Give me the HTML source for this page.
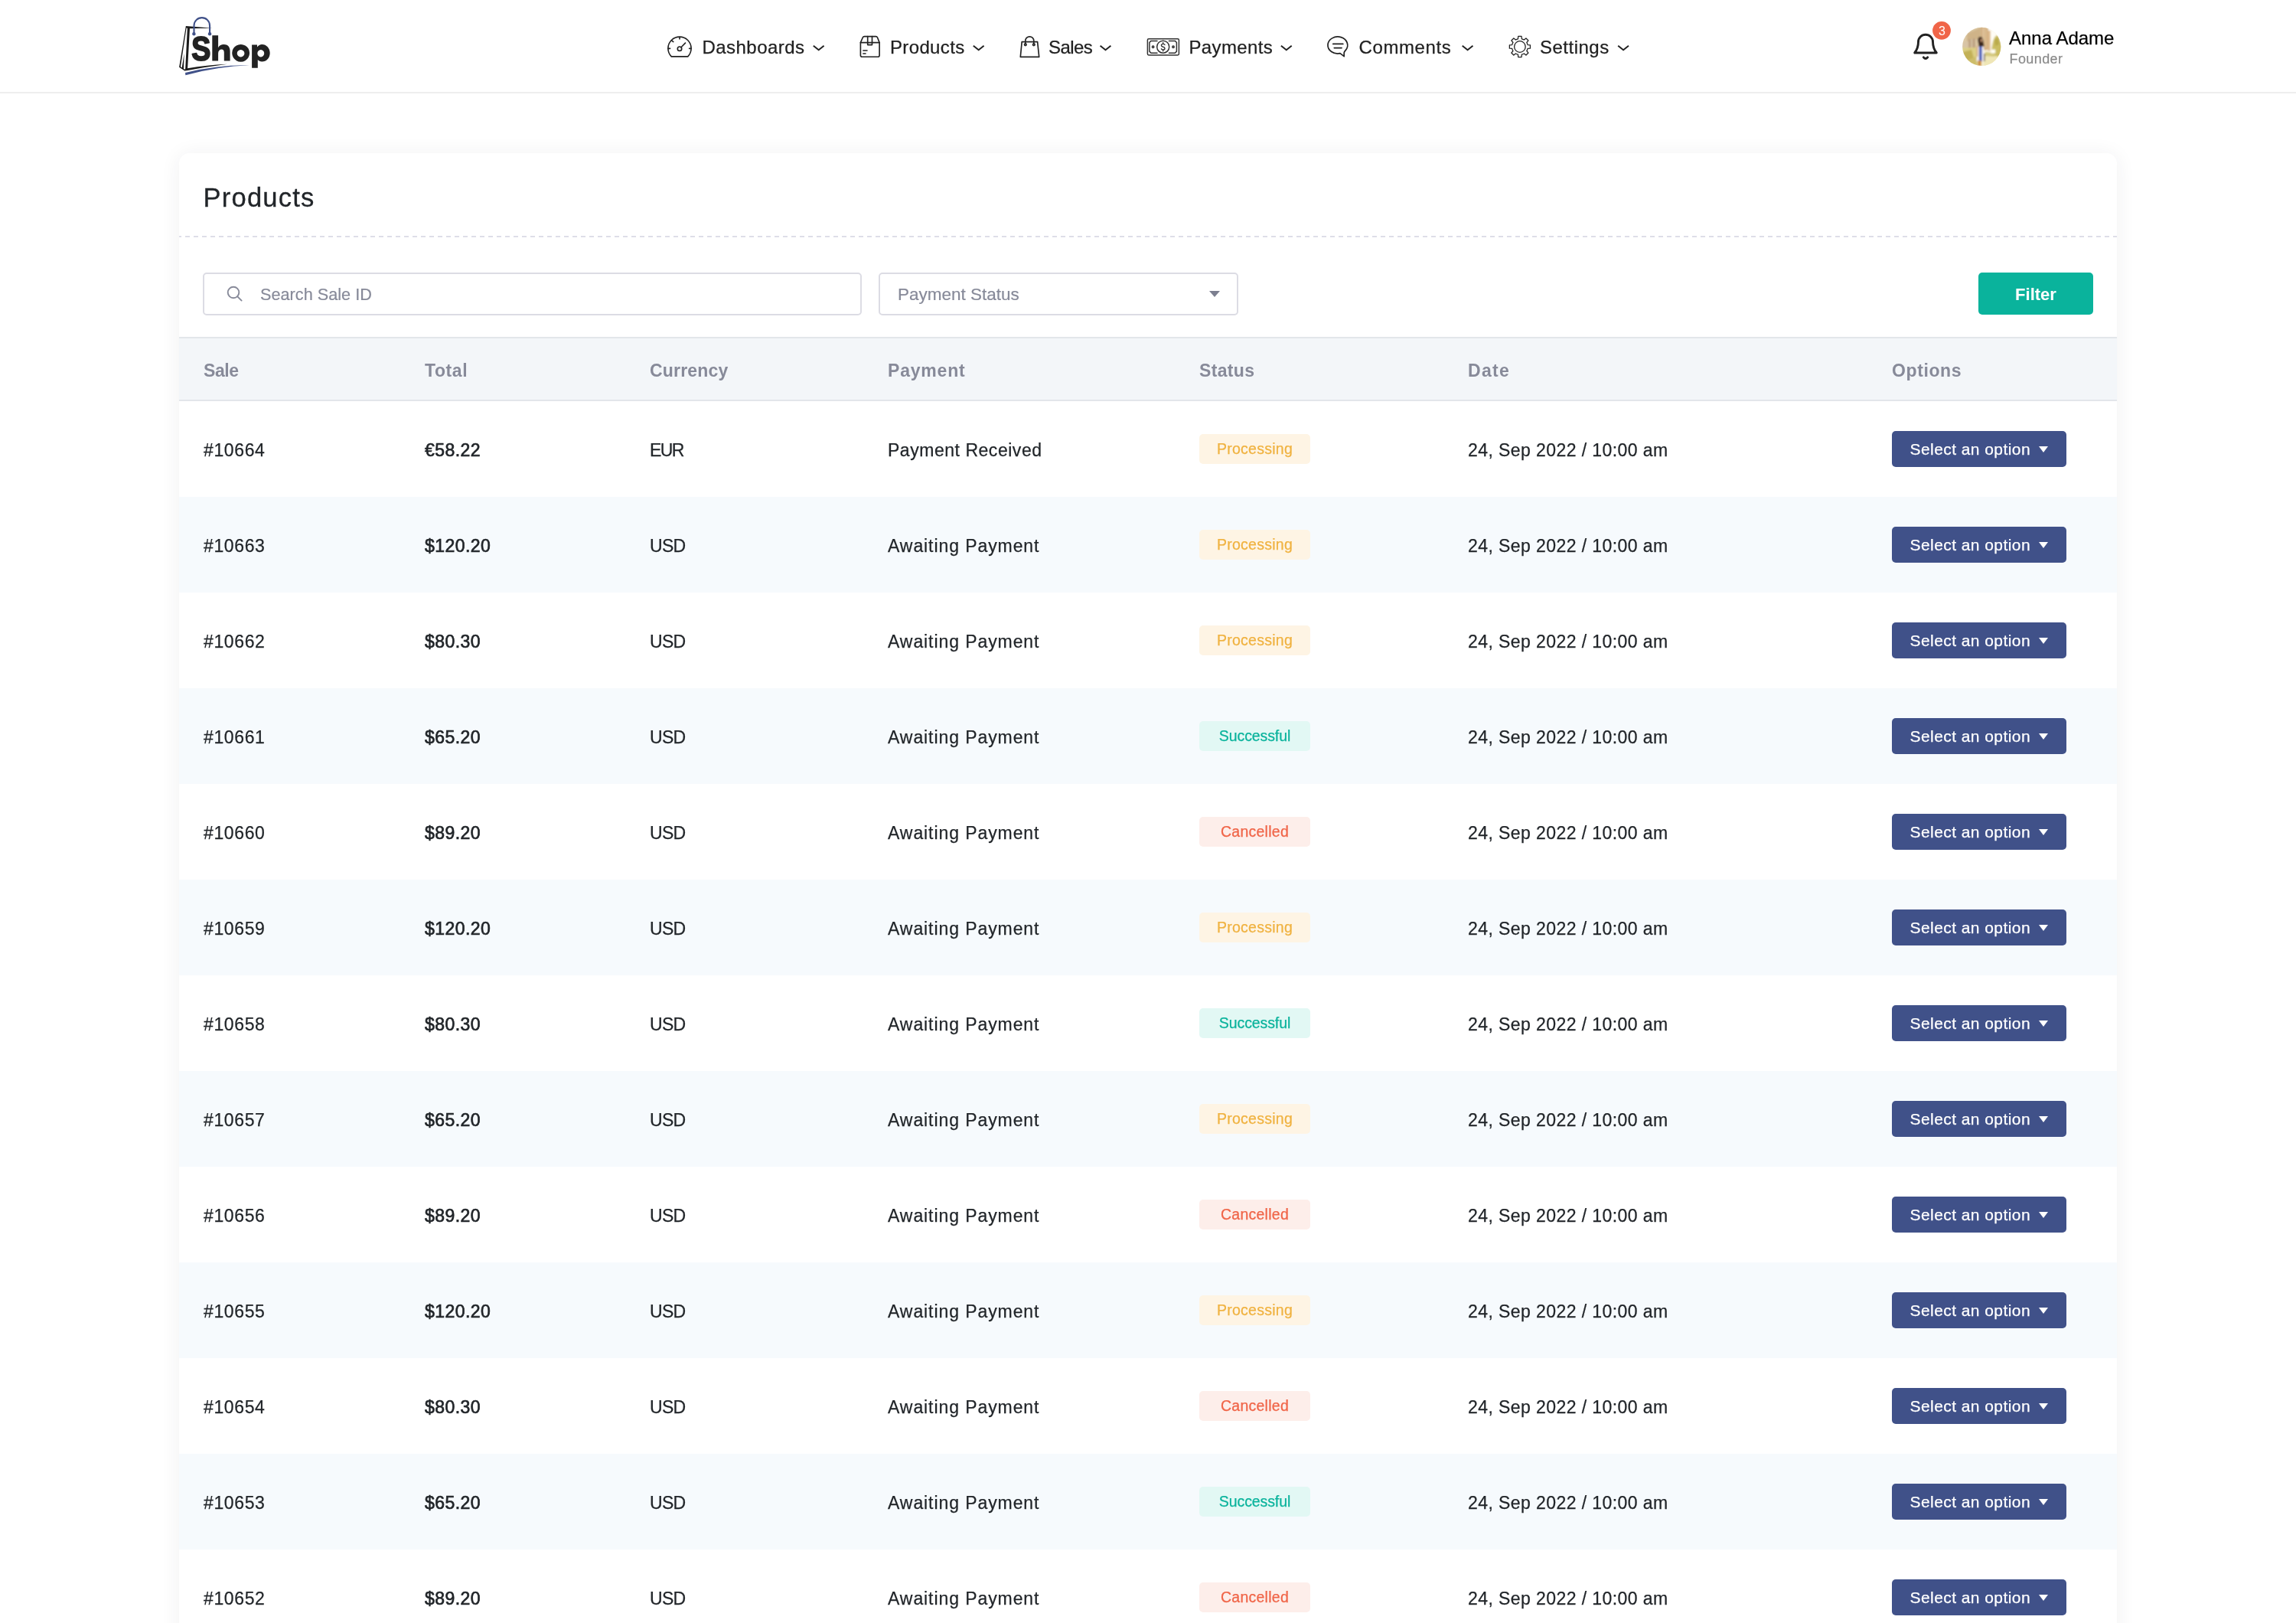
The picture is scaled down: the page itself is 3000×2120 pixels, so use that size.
<!DOCTYPE html>
<html lang="en"><head><meta charset="utf-8"><title>Products</title>
<style>
html,body{margin:0;padding:0;background:#fff;}
body{width:3000px;height:2120px;overflow:hidden;position:relative;font-family:"Liberation Sans",sans-serif;color:#212529;}
.a{position:absolute;white-space:nowrap;}
.hdr{will-change:transform;position:absolute;left:0;top:0;width:3000px;height:120px;border-bottom:2px solid #eeeeee;background:#fff;}
.hdr svg{position:absolute;left:0;top:0;overflow:visible;}
.nt{position:absolute;top:48px;font-size:24px;line-height:28px;color:#212121;white-space:nowrap;}
.uname{position:absolute;left:2625px;top:36px;font-size:24px;line-height:28px;color:#000;white-space:nowrap;}
.urole{position:absolute;left:2625.5px;top:66px;font-size:18px;line-height:22px;color:#8a8a8a;letter-spacing:0.4px;white-space:nowrap;}
.bnum{position:absolute;left:2525.5px;top:29px;width:24px;height:24px;line-height:24px;text-align:center;font-size:16px;color:#fff;}
.card{will-change:transform;position:absolute;left:234px;top:200px;width:2532px;height:1960px;background:#fff;border-radius:14px 14px 0 0;box-shadow:0 2px 27px rgba(45,45,55,0.07);overflow:hidden;}
.title{position:absolute;left:31.5px;top:37.5px;font-size:34.6px;line-height:40px;color:#212529;letter-spacing:1.2px;white-space:nowrap;}
.dash{position:absolute;left:0;top:108px;width:2532px;height:2px;background:repeating-linear-gradient(90deg,#dedee8 0,#dedee8 6px,transparent 6px,transparent 11px) -3px 0;}
.search{position:absolute;left:31px;top:156px;width:857px;height:52px;border:2px solid #dcdce4;border-radius:5px;background:#fff;}
.search span{position:absolute;left:73px;top:13px;font-size:21.7px;line-height:28px;color:#878a99;white-space:nowrap;}
.search svg{position:absolute;left:28.85px;top:15.15px;}
.sel{position:absolute;left:914px;top:156px;width:466px;height:52px;border:2px solid #dcdce4;border-radius:5px;background:#fff;}
.sel span{position:absolute;left:23px;top:13.3px;font-size:22.5px;line-height:28px;color:#878a99;white-space:nowrap;}
.sel i{position:absolute;left:430px;top:22px;width:0;height:0;border-left:7px solid transparent;border-right:7px solid transparent;border-top:8.5px solid #7c7f90;}
.filter{position:absolute;left:2351px;top:156px;width:150px;height:55px;border-radius:5px;background:#0ab39c;color:#fff;font-weight:bold;font-size:22px;line-height:58px;text-align:center;}
.tbl{position:absolute;left:0;top:240px;width:2532px;border-collapse:separate;border-spacing:0;table-layout:fixed;}
.tbl th{box-sizing:border-box;height:84px;padding:5px 0 0 32px;text-align:left;font-size:23px;font-weight:bold;color:#878a99;background:#f3f6f9;border-top:2px solid #e3e6ea;border-bottom:2px solid #e3e6ea;white-space:nowrap;}
.tbl td{box-sizing:border-box;height:125px;padding:4px 0 0 32px;letter-spacing:0.45px;text-align:left;font-size:23px;color:#212529;white-space:nowrap;vertical-align:middle;}
.tbl tr.alt td{background:#f6fafd;}
.c1{width:289px}.c2{width:294px}.c3{width:311px}.c4{width:407px}.c5{width:351px}.c6{width:554px}.c7{width:326px}
td.c1{letter-spacing:0.62px}td.c3{letter-spacing:-0.7px}td.c4{letter-spacing:0.92px}td.c6{letter-spacing:0.42px}
td.c5{padding-top:0}td.c7{padding-top:0;padding-bottom:1px;letter-spacing:0}
th.c1{letter-spacing:-0.4px}th.c2{letter-spacing:0.6px}th.c3{letter-spacing:0.2px}th.c4{letter-spacing:0.8px}th.c5{letter-spacing:0.35px}th.c6{letter-spacing:1.3px}th.c7{letter-spacing:0.6px}

.bs{letter-spacing:-0.1px !important}.badge{display:inline-block;width:145px;height:39px;line-height:39px;border-radius:5px;text-align:center;font-size:19.5px;letter-spacing:0.25px;}
.bp{background:#fef4e4;color:#f0b240;}
.bs{background:#e2f8f4;color:#0ab39c;}
.bc{background:#fdeeea;color:#f06548;}
.opt{display:inline-block;position:relative;width:228px;height:47px;line-height:47px;border-radius:5px;background:#405189;color:#fff;font-size:21px;box-sizing:border-box;padding-left:23.5px;letter-spacing:0.43px;}
.opt i{position:absolute;left:191.6px;top:20.6px;width:0;height:0;border-left:6.9px solid transparent;border-right:6.9px solid transparent;border-top:8px solid #fff;}

.tbl td{-webkit-text-stroke:0.25px currentColor;}
.nt{-webkit-text-stroke:0.25px #212121;}
.title{-webkit-text-stroke:0.3px #212529;}
.search span,.sel span{-webkit-text-stroke:0.2px #878a99;}
.uname{-webkit-text-stroke:0.25px #000;}
.urole{-webkit-text-stroke:0.2px #8a8a8a;}
td.c2{-webkit-text-stroke:0.68px #212529;}
@media (min-resolution:1.5dppx){html{overflow:hidden}body{transform:scale(0.5);transform-origin:0 0}}

</style></head><body>
<div class="hdr">
<svg width="3000" height="120" viewBox="0 0 3000 120">
<defs><clipPath id="avc"><circle cx="2589.3" cy="60.9" r="25.1"/></clipPath>
<filter id="bl" x="-10%" y="-10%" width="120%" height="120%"><feGaussianBlur stdDeviation="1"/></filter></defs>
<!-- logo -->
<g id="logo">
<path d="M242.86 33.9 L277.6 36.85 L247.96 37.15 L245.1 89.2 Q270 85 297 83.8 Q270 87.4 245.1 91.9 L241.3 92.6 L234.1 87.7 Z M243.6 36.4 L235.95 87.1 L237.7 88.4 L240.6 69.9 L240 89.9 L241.9 90.7 L242.25 89 L244.85 36.8 Z" fill="#1a1a1a" fill-rule="evenodd"/>
<path d="M253.5 44 V33.4 a10.28 10.3 0 0 1 20.56 0 V44" fill="none" stroke="#405189" stroke-width="2.1"/>
<circle cx="253.4" cy="44.3" r="2.2" fill="#405189"/><circle cx="274.05" cy="44.3" r="2.2" fill="#405189"/>
<path d="M242 94.9 Q285 84.6 326 85.3 Q285 86.7 242.4 98.2 Z" fill="#405189"/>
<text transform="translate(250.2 78.7) scale(0.86 1)" font-family="Liberation Sans, sans-serif" font-weight="bold" font-size="43.6" fill="#222" stroke="#222" stroke-width="2" stroke-linejoin="round">S</text>
<g fill="#222" fill-rule="evenodd">
<path d="M277.3 46.2 H285.1 V62.2 C286.6 59.4 289.4 58 292.4 58 C297.6 58 300.6 61.2 300.6 67 V79.5 H292.8 V68.4 C292.8 65.7 291.6 64.4 289.6 64.4 C287 64.4 285.1 66.4 285.1 69.7 V79.5 H277.3 Z"/>
<path d="M314.65 57.9 a11.45 11.4 0 1 0 0.01 0 Z M314.6 65 a4.8 4.7 0 1 1 -0.01 0 Z"/>
<path d="M329.1 58.5 H336 V61.6 C337.6 59.2 340 57.9 342.2 57.9 C348.2 57.9 352.7 62.8 352.7 69.2 C352.7 75.6 348.2 80.5 342.2 80.5 C340 80.5 338 79.6 336.8 78 V88.7 H329.1 Z M340.8 65 a4.4 4.7 0 1 1 -0.01 0 Z"/>
</g>
</g>
<!-- nav icons -->
<g fill="none" stroke="#222" stroke-width="1.65" stroke-linecap="round" stroke-linejoin="round">
<!-- dashboard -->
<path d="M877.25 73.8 A15.1 15.1 0 1 1 898.75 73.8 Z"/>
<path d="M888 48.6 V51 M872.9 63.3 H875.6 M900.6 63.3 H903.2 M877.6 52.8 L879.8 54.6"/>
<circle cx="888" cy="63.7" r="2.7"/><path d="M890 61.8 L895.5 56.1"/>
<!-- products -->
<path d="M1124.4 55.6 L1127.3 49 Q1127.9 47.6 1129.4 47.6 H1144.4 Q1145.9 47.6 1146.5 49 L1149.1 55.6 V72.2 a2 2 0 0 1 -2 2 H1126.4 a2 2 0 0 1 -2 -2 Z"/>
<path d="M1124.4 55.6 H1149.1 M1133.7 47.6 V58.6 H1139.5 V47.6 M1127.9 66 H1133 M1127.9 70 H1131"/>
<!-- sales -->
<path d="M1335.2 54.6 H1355.6 L1357.7 74.4 H1333.3 Z"/>
<path d="M1339.8 57 V53.3 a5.5 5.5 0 0 1 11 0 V57"/>
<circle cx="1339.8" cy="58.3" r="1.3"/><circle cx="1350.8" cy="58.3" r="1.3"/>
</g>
<g fill="none" stroke="#333" stroke-width="1.5" stroke-linecap="round" stroke-linejoin="round">
<!-- payments -->
<rect x="1499.4" y="50.7" width="41" height="21.2" rx="1.6"/>
<path d="M1512 53.4 H1504 L1501.9 55.5 V67.1 L1504 69.2 H1512 M1527.4 53.4 H1535.3 L1537.4 55.5 V67.1 L1535.3 69.2 H1527.4"/>
<circle cx="1519.7" cy="61.2" r="8"/>
<circle cx="1506.6" cy="61.2" r="1.2"/><circle cx="1533" cy="61.2" r="1.2"/>
<path d="M1522 58.6 Q1521.6 57.4 1519.7 57.4 Q1517.4 57.4 1517.4 59.2 Q1517.4 60.7 1519.7 61.2 Q1522 61.7 1522 63.2 Q1522 65 1519.7 65 Q1517.8 65 1517.4 63.8 M1519.7 55.7 V57.4 M1519.7 65 V66.8" stroke-width="1.4"/>
</g>
<g fill="none" stroke="#222" stroke-width="1.7" stroke-linecap="round" stroke-linejoin="round">
<!-- comments -->
<path d="M1751 69.7 A12.9 11 0 1 1 1758.2 65.6 Q1756.6 67.4 1756.2 68.8 V73.7 Z"/>
<path d="M1741.8 57.4 H1754.8 M1743.3 62.6 H1753"/>
</g>
<!-- settings -->
<g fill="none" stroke="#222" stroke-width="1.3" stroke-linejoin="round">
<path d="M1983.45 50.79L1983.76 47.47L1988.04 47.47L1988.35 50.79A10.5 10.5 0 0 1 1991.39 52.05L1993.95 49.92L1996.98 52.95L1994.85 55.51A10.5 10.5 0 0 1 1996.11 58.55L1999.43 58.86L1999.43 63.14L1996.11 63.45A10.5 10.5 0 0 1 1994.85 66.49L1996.98 69.05L1993.95 72.08L1991.39 69.95A10.5 10.5 0 0 1 1988.35 71.21L1988.04 74.53L1983.76 74.53L1983.45 71.21A10.5 10.5 0 0 1 1980.41 69.95L1977.85 72.08L1974.82 69.05L1976.95 66.49A10.5 10.5 0 0 1 1975.69 63.45L1972.37 63.14L1972.37 58.86L1975.69 58.55A10.5 10.5 0 0 1 1976.95 55.51L1974.82 52.95L1977.85 49.92L1980.41 52.05A10.5 10.5 0 0 1 1983.45 50.79Z"/>
<circle cx="1985.9" cy="61" r="7.3"/>
</g>
<!-- chevrons -->
<g fill="none" stroke="#222" stroke-width="2" stroke-linecap="butt" stroke-linejoin="miter">
<path d="M1062.8 59.7 l6.9 5.5 l6.9 -5.5"/>
<path d="M1271.8 59.7 l6.9 5.5 l6.9 -5.5"/>
<path d="M1437.6 59.7 l6.9 5.5 l6.9 -5.5"/>
<path d="M1673.9 59.7 l6.9 5.5 l6.9 -5.5"/>
<path d="M1910.7 59.7 l6.9 5.5 l6.9 -5.5"/>
<path d="M2114.2 59.7 l6.9 5.5 l6.9 -5.5"/>
</g>
<!-- bell -->
<g fill="none" stroke="#222" stroke-width="2.9" stroke-linecap="round" stroke-linejoin="round">
<path d="M2501.7 69 H2530.3 C2527.2 65 2525.5 61 2525.5 54.7 a9.5 9.5 0 0 0 -19 0 C2506.5 61 2504.8 65 2501.7 69 Z"/>
<path d="M2513.3 74.9 q2.7 3.3 5.4 0"/>
</g>
<circle cx="2537" cy="39.85" r="11.9" fill="#f06548"/>
<!-- avatar -->
<g clip-path="url(#avc)">
<rect x="2560" y="30" width="60" height="62" fill="#f4ecd0"/>
<g filter="url(#bl)">
<rect x="2596" y="30" width="26" height="36" fill="#fffdf6"/>
<path d="M2558 46 L2590 30 L2598 30 L2598 64 L2558 64 Z" fill="#dcc8a4"/>
<path d="M2570 44 L2588 36 L2588 50 L2570 54 Z" fill="#cfb388"/>
<path d="M2572 51.5 L2581 50 L2581 62.5 L2572 63 Z" fill="#bea283"/>
<rect x="2575.6" y="51" width="1.2" height="12" fill="#e6d6b6"/>
<path d="M2560 56 L2571 54 L2571 63 L2560 63 Z" fill="#d8c4a6"/>
<rect x="2588.6" y="33" width="8.6" height="32" fill="#cfa878"/>
<rect x="2590.8" y="33" width="1.5" height="30" fill="#ead7b4"/>
<rect x="2594" y="33" width="1.3" height="30" fill="#e6cfa6"/>
<rect x="2597.2" y="40" width="3.6" height="26" fill="#ddb98c"/>
<path d="M2558 62.6 L2584 62.2 L2584 92 L2558 92 Z" fill="#dccf84"/>
<path d="M2564 68 L2576 65 L2579 76 L2569 80 Z" fill="#c2b056"/>
<path d="M2572 78 L2582 74 L2583 86 L2574 88 Z" fill="#cdbd6a"/>
<rect x="2592" y="70" width="30" height="22" fill="#efe6b6"/>
<path d="M2594 68 L2608 70 L2606 74 L2594 73 Z" fill="#d3c77c"/>
<path d="M2602.5 62 Q2605 45 2611 46 L2616 60 L2615 75 L2607 73 L2602 66 Z" fill="#cbbd62"/>
<path d="M2606 52 L2611 49 L2612 58 L2607 60 Z" fill="#b9aa4c"/>
<rect x="2601.6" y="64.6" width="5.6" height="5" fill="#fffef4"/>
<path d="M2582.6 80 L2584.3 60.4 L2591.6 59.6 L2593.8 79 Z" fill="#f2eff2"/>
<rect x="2585.9" y="59.8" width="3.7" height="20.4" fill="#4059b8"/>
<path d="M2584.2 52.5 Q2584.6 47.8 2587.8 48 Q2591.2 48.4 2591.4 54 L2592.6 60.4 L2585.6 60.8 Z" fill="#3a281e"/>
<rect x="2587.6" y="50.6" width="2.6" height="4" fill="#b98a66"/>
<rect x="2582.6" y="60" width="1.8" height="14" fill="#d2a67e"/>
<rect x="2584.4" y="79" width="4.2" height="7.5" fill="#c98a3e"/>
<rect x="2592.2" y="70" width="1.3" height="10" fill="#4a3c30"/>
</g>
</g>
</svg>
<div class="nt" style="left:917.5px;letter-spacing:0.45px">Dashboards</div>
<div class="nt" style="left:1163px;letter-spacing:0.35px">Products</div>
<div class="nt" style="left:1370px;letter-spacing:-0.6px">Sales</div>
<div class="nt" style="left:1553.5px;letter-spacing:0.35px">Payments</div>
<div class="nt" style="left:1775.5px;letter-spacing:0.6px">Comments</div>
<div class="nt" style="left:2012px;letter-spacing:0.5px">Settings</div>
<div class="bnum">3</div>
<div class="uname">Anna Adame</div>
<div class="urole">Founder</div>
</div>

<div class="card">
<div class="title">Products</div>
<div class="dash"></div>
<div class="search"><svg width="22" height="22" viewBox="0 0 22 22"><circle cx="9" cy="9" r="7.3" fill="none" stroke="#878a99" stroke-width="1.9"/><path d="M14.3 14.3 L19.6 19.6" stroke="#878a99" stroke-width="1.9" stroke-linecap="round"/></svg><span>Search Sale ID</span></div>
<div class="sel"><span>Payment Status</span><i></i></div>
<div class="filter">Filter</div>

<table class="tbl"><thead><tr><th class="c1">Sale</th><th class="c2">Total</th><th class="c3">Currency</th><th class="c4">Payment</th><th class="c5">Status</th><th class="c6">Date</th><th class="c7">Options</th></tr></thead>
<tbody>
<tr><td class="c1">#10664</td><td class="c2">€58.22</td><td class="c3" style="letter-spacing:-1.6px">EUR</td><td class="c4" style="letter-spacing:0.53px">Payment Received</td><td class="c5"><span class="badge bp">Processing</span></td><td class="c6">24, Sep 2022 / 10:00 am</td><td class="c7"><span class="opt">Select an option<i></i></span></td></tr>
<tr class="alt"><td class="c1">#10663</td><td class="c2">$120.20</td><td class="c3">USD</td><td class="c4">Awaiting Payment</td><td class="c5"><span class="badge bp">Processing</span></td><td class="c6">24, Sep 2022 / 10:00 am</td><td class="c7"><span class="opt">Select an option<i></i></span></td></tr>
<tr><td class="c1">#10662</td><td class="c2">$80.30</td><td class="c3">USD</td><td class="c4">Awaiting Payment</td><td class="c5"><span class="badge bp">Processing</span></td><td class="c6">24, Sep 2022 / 10:00 am</td><td class="c7"><span class="opt">Select an option<i></i></span></td></tr>
<tr class="alt"><td class="c1">#10661</td><td class="c2">$65.20</td><td class="c3">USD</td><td class="c4">Awaiting Payment</td><td class="c5"><span class="badge bs">Successful</span></td><td class="c6">24, Sep 2022 / 10:00 am</td><td class="c7"><span class="opt">Select an option<i></i></span></td></tr>
<tr><td class="c1">#10660</td><td class="c2">$89.20</td><td class="c3">USD</td><td class="c4">Awaiting Payment</td><td class="c5"><span class="badge bc">Cancelled</span></td><td class="c6">24, Sep 2022 / 10:00 am</td><td class="c7"><span class="opt">Select an option<i></i></span></td></tr>
<tr class="alt"><td class="c1">#10659</td><td class="c2">$120.20</td><td class="c3">USD</td><td class="c4">Awaiting Payment</td><td class="c5"><span class="badge bp">Processing</span></td><td class="c6">24, Sep 2022 / 10:00 am</td><td class="c7"><span class="opt">Select an option<i></i></span></td></tr>
<tr><td class="c1">#10658</td><td class="c2">$80.30</td><td class="c3">USD</td><td class="c4">Awaiting Payment</td><td class="c5"><span class="badge bs">Successful</span></td><td class="c6">24, Sep 2022 / 10:00 am</td><td class="c7"><span class="opt">Select an option<i></i></span></td></tr>
<tr class="alt"><td class="c1">#10657</td><td class="c2">$65.20</td><td class="c3">USD</td><td class="c4">Awaiting Payment</td><td class="c5"><span class="badge bp">Processing</span></td><td class="c6">24, Sep 2022 / 10:00 am</td><td class="c7"><span class="opt">Select an option<i></i></span></td></tr>
<tr><td class="c1">#10656</td><td class="c2">$89.20</td><td class="c3">USD</td><td class="c4">Awaiting Payment</td><td class="c5"><span class="badge bc">Cancelled</span></td><td class="c6">24, Sep 2022 / 10:00 am</td><td class="c7"><span class="opt">Select an option<i></i></span></td></tr>
<tr class="alt"><td class="c1">#10655</td><td class="c2">$120.20</td><td class="c3">USD</td><td class="c4">Awaiting Payment</td><td class="c5"><span class="badge bp">Processing</span></td><td class="c6">24, Sep 2022 / 10:00 am</td><td class="c7"><span class="opt">Select an option<i></i></span></td></tr>
<tr><td class="c1">#10654</td><td class="c2">$80.30</td><td class="c3">USD</td><td class="c4">Awaiting Payment</td><td class="c5"><span class="badge bc">Cancelled</span></td><td class="c6">24, Sep 2022 / 10:00 am</td><td class="c7"><span class="opt">Select an option<i></i></span></td></tr>
<tr class="alt"><td class="c1">#10653</td><td class="c2">$65.20</td><td class="c3">USD</td><td class="c4">Awaiting Payment</td><td class="c5"><span class="badge bs">Successful</span></td><td class="c6">24, Sep 2022 / 10:00 am</td><td class="c7"><span class="opt">Select an option<i></i></span></td></tr>
<tr><td class="c1">#10652</td><td class="c2">$89.20</td><td class="c3">USD</td><td class="c4">Awaiting Payment</td><td class="c5"><span class="badge bc">Cancelled</span></td><td class="c6">24, Sep 2022 / 10:00 am</td><td class="c7"><span class="opt">Select an option<i></i></span></td></tr>
</tbody></table>
</div>
</body></html>
